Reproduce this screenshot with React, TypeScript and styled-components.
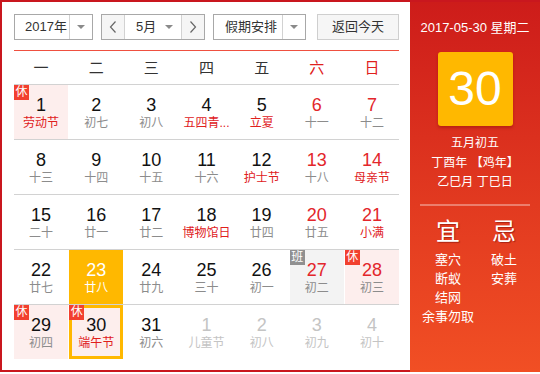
import React from 'react';
import styled, { createGlobalStyle } from 'styled-components';

const GlobalStyle = createGlobalStyle`
  html, body { margin: 0; padding: 0; background: #fff; }
  body { font-family: "Liberation Sans", Arial, "Noto Sans CJK SC", sans-serif; }
`;

const Wrapper = styled.div`
  display: flex;
  width: 540px;
  height: 372px;
`;

const Main = styled.div`
  width: 410px;
  height: 372px;
  box-sizing: border-box;
  border: 2px solid #c9171e;
  border-right: none;
  padding: 12px 11px 0 12px;
`;

const Toolbar = styled.div`
  display: flex;
  height: 26px;
  gap: 8px;
`;

const Box = styled.div<{ $w: number }>`
  width: ${p => p.$w}px;
  height: 26px;
  box-sizing: border-box;
  border: 1px solid #a8a8a8;
  display: flex;
  background: #fff;
  font-size: 13px;
  color: #333;
`;

const BoxText = styled.div<{ $pl: number }>`
  flex: 1;
  padding-left: ${p => p.$pl}px;
  line-height: 24px;
  white-space: nowrap;
`;

const ArrowCell = styled.div`
  width: 22px;
  border-left: 1px solid #d2d2d2;
  display: flex;
  align-items: center;
  justify-content: center;
`;

const Triangle = styled.span`
  width: 0;
  height: 0;
  border-left: 4px solid transparent;
  border-right: 4px solid transparent;
  border-top: 4px solid #8a8a8a;
`;

const NavBtn = styled.div<{ $side: 'l' | 'r' }>`
  width: 22px;
  background: #f5f5f5;
  display: flex;
  align-items: center;
  justify-content: center;
  ${p => (p.$side === 'l' ? 'border-right' : 'border-left')}: 1px solid #d2d2d2;
`;

const MonthInner = styled.div`
  flex: 1;
  display: flex;
  align-items: center;
  padding-left: 11px;
  padding-right: 8px;
  line-height: 24px;
`;

const MonthLabel = styled.span`
  flex: 1;
`;

const TodayBtn = styled.div`
  margin-left: auto;
  width: 82px;
  height: 26px;
  box-sizing: border-box;
  border: 1px solid #cfcfcf;
  background: #f6f6f6;
  font-size: 13px;
  color: #333;
  line-height: 24px;
  text-align: center;
`;

const RedLine = styled.div`
  margin-top: 10px;
  height: 1px;
  background: #ef5040;
`;

const WeekHeader = styled.div`
  display: grid;
  grid-template-columns: repeat(7, 1fr);
  column-gap: 1px;
  height: 33px;
`;

const WeekName = styled.div<{ $red?: boolean }>`
  text-align: center;
  line-height: 33px;
  font-size: 15px;
  color: ${p => (p.$red ? '#e0201c' : '#333')};
`;

const Row = styled.div`
  border-top: 1px solid #d2d2d2;
  display: grid;
  grid-template-columns: repeat(7, 1fr);
  column-gap: 1px;
  height: 54px;
`;

const Cell = styled.div<{ $bg?: string; $selected?: boolean }>`
  position: relative;
  height: 54px;
  box-sizing: border-box;
  padding-top: 10px;
  display: flex;
  flex-direction: column;
  align-items: center;
  background: ${p => p.$bg ?? 'transparent'};
  box-shadow: ${p => (p.$selected ? 'inset 0 0 0 3px #ffb800' : 'none')};
`;

const DayNum = styled.div<{ $color: string }>`
  font-size: 18px;
  line-height: 20px;
  color: ${p => p.$color};
`;

const Lunar = styled.div<{ $color: string }>`
  font-size: 12px;
  line-height: 16px;
  color: ${p => p.$color};
  white-space: nowrap;
`;

const Badge = styled.span<{ $kind: '休' | '班' }>`
  position: absolute;
  top: 0;
  left: 0;
  width: 15px;
  height: 15px;
  line-height: 15px;
  text-align: center;
  font-size: 12px;
  color: #fff;
  background: ${p => (p.$kind === '休' ? '#f2402f' : '#909090')};
`;

const Panel = styled.div`
  width: 130px;
  height: 372px;
  box-sizing: border-box;
  border-top: 2px solid #c9171e;
  background: linear-gradient(180deg, #cd1c1a 0%, #e23a20 55%, #f14f24 100%);
  display: flex;
  flex-direction: column;
  align-items: center;
  color: #fff;
`;

const DateLine = styled.div`
  margin-top: 16px;
  font-size: 13px;
  line-height: 20px;
  white-space: nowrap;
`;

const BigDay = styled.div`
  margin-top: 14px;
  width: 75px;
  height: 74px;
  border-radius: 3px;
  background: #ffb800;
  box-shadow: 0 2px 3px rgba(120, 0, 0, 0.35);
  font-size: 48px;
  line-height: 74px;
  text-align: center;
  color: #fff;
`;

const LunarInfo = styled.div`
  margin-top: 8px;
  font-size: 12px;
  line-height: 19.5px;
  text-align: center;
  white-space: nowrap;
`;

const Separator = styled.div`
  margin-top: 11px;
  width: 110px;
  height: 2px;
  background: rgba(255, 255, 255, 0.35);
`;

const YiJi = styled.div`
  margin-top: 11px;
  display: grid;
  grid-template-columns: 58px 54px;
  justify-content: center;
`;

const YiJiCol = styled.div`
  display: flex;
  flex-direction: column;
  align-items: center;
`;

const YiJiTitle = styled.div`
  font-size: 24px;
  line-height: 30px;
  margin-bottom: 3px;
  text-shadow: 1px 1px 1px rgba(90, 0, 0, 0.45);
`;

const YiJiItem = styled.div`
  font-size: 13px;
  line-height: 19px;
  white-space: nowrap;
`;

const Chevron = ({ dir }: { dir: 'l' | 'r' }) => (
  <svg width="8" height="14" viewBox="0 0 8 14">
    <path
      d={dir === 'l' ? 'M6.5 1.5 L1.5 7 L6.5 12.5' : 'M1.5 1.5 L6.5 7 L1.5 12.5'}
      fill="none"
      stroke="#666"
      strokeWidth="1.2"
    />
  </svg>
);

type Day = {
  d: number;
  l: string;
  wk?: boolean;
  fest?: boolean;
  badge?: '休' | '班';
  bg?: 'rest' | 'work' | 'today';
  sel?: boolean;
  other?: boolean;
};

const weeks: Day[][] = [
  [
    { d: 1, l: '劳动节', fest: true, badge: '休', bg: 'rest' },
    { d: 2, l: '初七' },
    { d: 3, l: '初八' },
    { d: 4, l: '五四青...', fest: true },
    { d: 5, l: '立夏', fest: true },
    { d: 6, l: '十一', wk: true },
    { d: 7, l: '十二', wk: true },
  ],
  [
    { d: 8, l: '十三' },
    { d: 9, l: '十四' },
    { d: 10, l: '十五' },
    { d: 11, l: '十六' },
    { d: 12, l: '护士节', fest: true },
    { d: 13, l: '十八', wk: true },
    { d: 14, l: '母亲节', wk: true, fest: true },
  ],
  [
    { d: 15, l: '二十' },
    { d: 16, l: '廿一' },
    { d: 17, l: '廿二' },
    { d: 18, l: '博物馆日', fest: true },
    { d: 19, l: '廿四' },
    { d: 20, l: '廿五', wk: true },
    { d: 21, l: '小满', wk: true, fest: true },
  ],
  [
    { d: 22, l: '廿七' },
    { d: 23, l: '廿八', bg: 'today' },
    { d: 24, l: '廿九' },
    { d: 25, l: '三十' },
    { d: 26, l: '初一' },
    { d: 27, l: '初二', wk: true, badge: '班', bg: 'work' },
    { d: 28, l: '初三', wk: true, badge: '休', bg: 'rest' },
  ],
  [
    { d: 29, l: '初四', badge: '休', bg: 'rest' },
    { d: 30, l: '端午节', fest: true, badge: '休', bg: 'rest', sel: true },
    { d: 31, l: '初六' },
    { d: 1, l: '儿童节', other: true },
    { d: 2, l: '初八', other: true },
    { d: 3, l: '初九', other: true },
    { d: 4, l: '初十', other: true },
  ],
];

const bgMap: Record<string, string> = {
  rest: '#fdeeed',
  work: '#f3f3f3',
  today: '#ffb800',
};

const weekNames = ['一', '二', '三', '四', '五', '六', '日'];

export default function App() {
  return (
    <>
      <GlobalStyle />
      <Wrapper>
        <Main>
          <Toolbar>
            <Box $w={79}>
              <BoxText $pl={10}>2017年</BoxText>
              <ArrowCell>
                <Triangle />
              </ArrowCell>
            </Box>
            <Box $w={104}>
              <NavBtn $side="l">
                <Chevron dir="l" />
              </NavBtn>
              <MonthInner>
                <MonthLabel>5月</MonthLabel>
                <Triangle />
              </MonthInner>
              <NavBtn $side="r">
                <Chevron dir="r" />
              </NavBtn>
            </Box>
            <Box $w={93}>
              <BoxText $pl={11}>假期安排</BoxText>
              <ArrowCell>
                <Triangle />
              </ArrowCell>
            </Box>
            <TodayBtn>返回今天</TodayBtn>
          </Toolbar>
          <RedLine />
          <WeekHeader>
            {weekNames.map((w, i) => (
              <WeekName key={w} $red={i >= 5}>
                {w}
              </WeekName>
            ))}
          </WeekHeader>
          {weeks.map((week, wi) => (
            <Row key={wi}>
              {week.map((c, ci) => {
                const today = c.bg === 'today';
                const numColor = c.other ? '#c4c4c4' : today ? '#fff' : c.wk ? '#e3262b' : '#111';
                const lunarColor = c.other
                  ? '#c4c4c4'
                  : today
                  ? '#fff'
                  : c.fest
                  ? '#e0201c'
                  : '#8c8c8c';
                return (
                  <Cell key={ci} $bg={c.bg ? bgMap[c.bg] : undefined} $selected={c.sel}>
                    {c.badge && <Badge $kind={c.badge}>{c.badge}</Badge>}
                    <DayNum $color={numColor}>{c.d}</DayNum>
                    <Lunar $color={lunarColor}>{c.l}</Lunar>
                  </Cell>
                );
              })}
            </Row>
          ))}
        </Main>
        <Panel>
          <DateLine>2017-05-30 星期二</DateLine>
          <BigDay>30</BigDay>
          <LunarInfo>
            五月初五
            <br />
            丁酉年 【鸡年】
            <br />
            乙巳月 丁巳日
          </LunarInfo>
          <Separator />
          <YiJi>
            <YiJiCol>
              <YiJiTitle>宜</YiJiTitle>
              <YiJiItem>塞穴</YiJiItem>
              <YiJiItem>断蚁</YiJiItem>
              <YiJiItem>结网</YiJiItem>
              <YiJiItem>余事勿取</YiJiItem>
            </YiJiCol>
            <YiJiCol>
              <YiJiTitle>忌</YiJiTitle>
              <YiJiItem>破土</YiJiItem>
              <YiJiItem>安葬</YiJiItem>
            </YiJiCol>
          </YiJi>
        </Panel>
      </Wrapper>
    </>
  );
}
